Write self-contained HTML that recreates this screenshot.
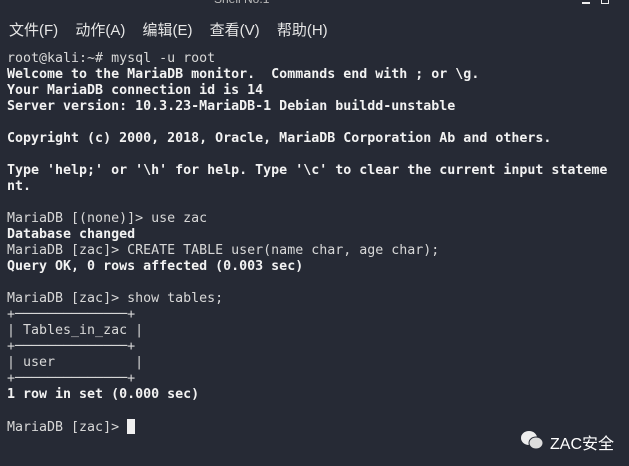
<!DOCTYPE html>
<html><head><meta charset="utf-8"><style>
html,body{margin:0;padding:0;width:629px;height:466px;overflow:hidden;background:#262a35;}
.title{position:absolute;left:0;top:0;width:629px;height:8px;color:#ccc;font:12px "Liberation Sans",sans-serif;}
.menu{position:absolute;left:9px;top:19px;font:15px "Liberation Sans","Noto Sans CJK SC",sans-serif;color:#e6e6e6;white-space:pre;}
.menu span{margin-right:13px}
pre{position:absolute;left:7px;top:51px;margin:0;font:13.3px/16px "DejaVu Sans Mono",monospace;color:#d8d8d8;}
b{color:#f2f2f2}
.cur{display:inline-block;width:8px;height:15px;background:#f0f0f0;vertical-align:-3px}
.wm{position:absolute;color:#fff;font:16px "Liberation Sans","Noto Sans CJK SC",sans-serif;}
.ctl{position:absolute;top:0;height:4px;background:#eee}
</style></head><body>
<div class="title"><div style="position:absolute;left:214px;top:-8px;color:#bbb">Shell No.1</div></div>
<div class="ctl" style="left:582px;width:8px;top:2px;height:2px"></div>
<div class="ctl" style="left:601px;width:6px;height:3px;background:none;border:1px solid #eee;border-top:none"></div>
<div class="menu"><span>文件(F)</span> <span>动作(A)</span> <span>编辑(E)</span> <span>查看(V)</span> <span>帮助(H)</span></div>
<pre>root@kali:~# mysql -u root
<b>Welcome to the MariaDB monitor.  Commands end with ; or \g.
Your MariaDB connection id is 14
Server version: 10.3.23-MariaDB-1 Debian buildd-unstable

Copyright (c) 2000, 2018, Oracle, MariaDB Corporation Ab and others.

Type 'help;' or '\h' for help. Type '\c' to clear the current input stateme
nt.</b>

MariaDB [(none)]&gt; use zac
<b>Database changed</b>
MariaDB [zac]&gt; CREATE TABLE user(name char, age char);
<b>Query OK, 0 rows affected (0.003 sec)</b>

MariaDB [zac]&gt; show tables;
+──────────────+
| Tables_in_zac |
+──────────────+
| user          |
+──────────────+
<b>1 row in set (0.000 sec)</b>

MariaDB [zac]&gt; <span class="cur"></span></pre>
<svg style="position:absolute;left:520px;top:430px" width="25" height="20" viewBox="0 0 25 20"><ellipse cx="9" cy="8" rx="8" ry="7" fill="#eee"/><ellipse cx="16" cy="13" rx="7" ry="6" fill="#ddd" stroke="#262a35" stroke-width="1"/></svg>
<div class="wm" style="left:550px;top:430px">ZAC安全</div>
</body></html>
